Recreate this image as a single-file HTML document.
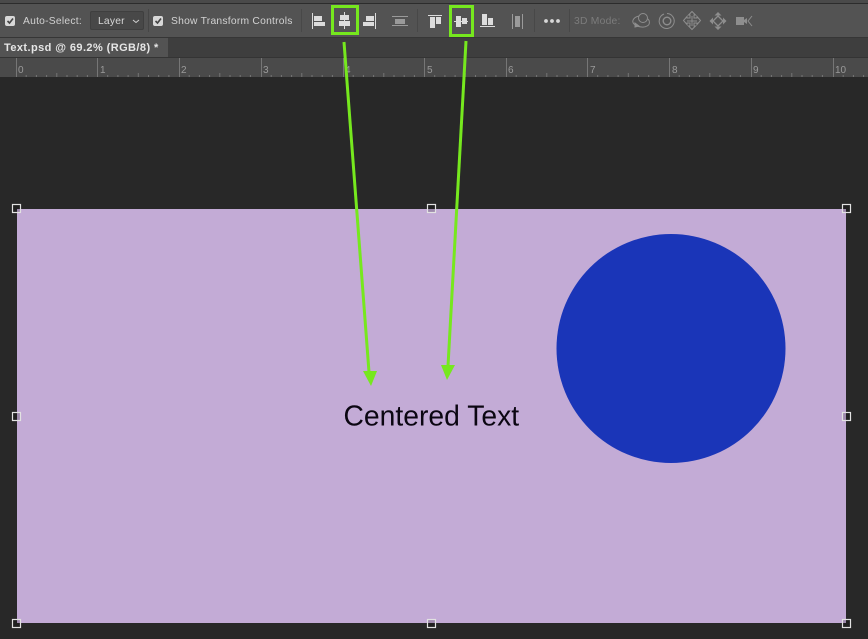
<!DOCTYPE html>
<html><head><meta charset="utf-8"><style>
html,body{margin:0;padding:0;width:868px;height:639px;overflow:hidden;background:#282828}
svg{display:block;filter:blur(.35px)}
text{font-family:"Liberation Sans",sans-serif}
</style></head><body>
<svg width="868" height="639" viewBox="0 0 868 639" xmlns="http://www.w3.org/2000/svg">
<rect width="868" height="639" fill="#282828"/>
<!-- top bars -->
<rect width="868" height="3" fill="#4a4a4a"/>
<rect y="3" width="868" height="1" fill="#2c2c2c"/>
<rect y="4" width="868" height="33" fill="#535353"/>
<rect y="37" width="868" height="1" fill="#363636"/>
<rect y="38" width="868" height="20" fill="#3e3e3e"/>
<rect y="38" width="168" height="20" fill="#535353"/>
<rect y="57" width="868" height="1" fill="#343434"/>
<rect y="58" width="868" height="19" fill="#4a4a4a"/>
<!-- options -->
<rect x="5" y="16" width="10" height="10" rx="2" fill="#d8d8d8"/>
<path d="M7.500 21l2 2 3.500-4.500" stroke="#444" stroke-width="1.600" fill="none"/>
<text x="23" y="24" font-size="10.300" fill="#d2d2d2" letter-spacing=".24">Auto-Select:</text>
<rect x="90.500" y="11.500" width="53" height="18" rx="1.500" fill="#484848" stroke="#3f3f3f"/>
<text x="98" y="24" font-size="10.300" fill="#d8d8d8" letter-spacing=".2">Layer</text>
<path d="M133 20l3 2.500 3-2.500" stroke="#d0d0d0" fill="none"/>
<rect x="148" y="9" width="1" height="23" fill="#464646"/>
<rect x="153" y="16" width="10" height="10" rx="2" fill="#d8d8d8"/>
<path d="M155.500 21l2 2 3.500-4.500" stroke="#444" stroke-width="1.600" fill="none"/>
<text x="171" y="24" font-size="10.300" fill="#d2d2d2" letter-spacing=".24">Show Transform Controls</text>
<rect x="301" y="9" width="1" height="23" fill="#484848"/>
<!-- alignment icons -->
<g fill="#dcdcdc">
<rect x="312" y="13" width="1" height="16"/><rect x="314" y="16" width="8" height="5"/><rect x="314" y="22" width="11" height="4"/>
<rect x="344" y="12" width="1" height="17"/><rect x="340" y="15" width="9" height="5"/><rect x="339" y="21" width="11" height="5"/>
<rect x="375" y="13" width="1" height="16"/><rect x="366" y="16" width="8" height="5"/><rect x="363" y="22" width="11" height="4"/>
<rect x="428" y="15" width="14" height="1"/><rect x="430" y="17" width="5" height="11"/><rect x="436" y="17" width="5" height="7"/>
<rect x="454" y="21" width="14" height="1"/><rect x="456" y="16" width="5" height="11"/><rect x="462" y="18" width="5" height="6"/>
<rect x="480" y="26" width="15" height="1"/><rect x="482" y="14" width="5" height="11"/><rect x="488" y="18" width="5" height="7"/>
</g>
<g fill="#9a9a9a">
<rect x="392" y="16" width="16" height="1"/><rect x="392" y="25" width="16" height="1"/><rect x="395" y="19" width="10" height="5"/>
<rect x="512" y="14" width="1" height="15"/><rect x="522" y="14" width="1" height="15"/><rect x="515" y="16" width="5" height="11"/>
</g>
<rect x="417" y="9" width="1" height="23" fill="#484848"/>
<rect x="534" y="9" width="1" height="23" fill="#484848"/>
<rect x="569" y="9" width="1" height="23" fill="#484848"/>
<g fill="#d8d8d8"><circle cx="546" cy="21" r="1.900"/><circle cx="552" cy="21" r="1.900"/><circle cx="558" cy="21" r="1.900"/></g>
<text x="574" y="24" font-size="10.300" fill="#7c7c7c" letter-spacing=".25">3D Mode:</text>
<!-- 3D icons -->
<g fill="none" stroke="#8e8e8e">
<circle cx="643" cy="18" r="4.500"/><path d="M639 16c-5 1-8 5-5 8 3 3 10 4 13 2 3-1 3-5 1-7"/>
<path d="M635 23l4 3-4 1z" fill="#8e8e8e"/>
<path d="M664 14a7.500 7.500 0 1 0 3-.5"/><circle cx="667" cy="21" r="3.800" stroke-width="1.400"/>
<path d="M690 18v-3h-1.500l3.500-3.500 3.500 3.500h-1.500v3h3v-1.500l3.500 4-3.500 4v-1.500h-3v3h1.500l-3.500 3.500-3.500-3.500h1.500v-3h-3v1.500l-3.500-4 3.500-4v1.500z"/><path d="M692 16v10M687 21h10"/>
<path d="M718 16l5 5-5 5-5-5z" stroke-width="1.300"/>
<path d="M752 16l-4 5 4 5" />
</g>
<g fill="#8e8e8e">
<path d="M718 12l3.500 3.500h-7zM718 30l3.500-3.500h-7zM709.500 21l3.500-3.500v7zM726.500 21l-3.500-3.500v7z"/>
<rect x="736" y="17" width="8" height="8"/><path d="M744 20l3-2v6l-3-2z"/>
</g>
<!-- tab -->
<text x="4" y="51" font-size="11" font-weight="bold" fill="#e6e6e6" letter-spacing=".42">Text.psd @ 69.2% (RGB/8) *</text>
<!-- ruler -->
<g fill="#9a9a9a" font-size="10">
<text x="18" y="73">0</text><text x="100" y="73">1</text><text x="181" y="73">2</text><text x="263" y="73">3</text><text x="345" y="73">4</text><text x="427" y="73">5</text><text x="508" y="73">6</text><text x="590" y="73">7</text><text x="672" y="73">8</text><text x="753" y="73">9</text><text x="835" y="73">10</text>
</g>
<g fill="#767676">
<rect x="16" y="58" width="1" height="19"/><rect x="97" y="58" width="1" height="19"/><rect x="179" y="58" width="1" height="19"/><rect x="261" y="58" width="1" height="19"/><rect x="343" y="58" width="1" height="19"/><rect x="424" y="58" width="1" height="19"/><rect x="506" y="58" width="1" height="19"/><rect x="587" y="58" width="1" height="19"/><rect x="669" y="58" width="1" height="19"/><rect x="751" y="58" width="1" height="19"/><rect x="833" y="58" width="1" height="19"/>
</g>
<path d="M26.200 75v2M36.400 75v2M46.600 75v2M56.800 73v4M67 75v2M77.200 75v2M87.400 75v2M107.700 75v2M117.900 75v2M128.100 75v2M138.300 73v4M148.500 75v2M158.700 75v2M168.900 75v2M189.200 75v2M199.400 75v2M209.600 75v2M219.800 73v4M230 75v2M240.200 75v2M250.400 75v2M271.200 75v2M281.400 75v2M291.600 75v2M301.800 73v4M312 75v2M322.200 75v2M332.400 75v2M353.200 75v2M363.400 75v2M373.600 75v2M383.800 73v4M394 75v2M404.200 75v2M414.400 75v2M434.700 75v2M444.900 75v2M455.100 75v2M465.300 73v4M475.500 75v2M485.700 75v2M495.900 75v2M516.200 75v2M526.400 75v2M536.600 75v2M546.800 73v4M557 75v2M567.200 75v2M577.400 75v2M597.700 75v2M607.900 75v2M618.100 75v2M628.300 73v4M638.500 75v2M648.700 75v2M658.900 75v2M679.200 75v2M689.400 75v2M699.600 75v2M709.800 73v4M720 75v2M730.200 75v2M740.400 75v2M761.200 75v2M771.400 75v2M781.600 75v2M791.800 73v4M802 75v2M812.200 75v2M822.400 75v2M843.200 75v2M853.400 75v2M863.600 75v2" stroke="#767676"/>
<!-- canvas -->
<rect x="17" y="209" width="829" height="414" fill="#c3abd6"/>
<circle cx="671" cy="348.500" r="114.500" fill="#1a35b8"/>
<text x="343.500" y="425.500" font-size="28.300" fill="#0b0612">Centered Text</text>
<!-- transform handles -->
<g fill="#00000030" stroke="#e2e2e2" stroke-width="1.200">
<rect x="12.500" y="204.500" width="8" height="8"/><rect x="427.500" y="204.500" width="8" height="8"/><rect x="842.500" y="204.500" width="8" height="8"/>
<rect x="12.500" y="412.500" width="8" height="8"/><rect x="842.500" y="412.500" width="8" height="8"/>
<rect x="12.500" y="619.500" width="8" height="8"/><rect x="427.500" y="619.500" width="8" height="8"/><rect x="842.500" y="619.500" width="8" height="8"/>
</g>
<!-- highlights -->
<g fill="none" stroke="#76e81e" stroke-width="3">
<rect x="332.500" y="6.500" width="25" height="27"/><rect x="450.500" y="6.500" width="22" height="29"/>
</g>
<!-- arrows -->
<path d="M344 42L369 372" stroke="#76e81e" stroke-width="3" fill="none"/>
<path d="M466 41L448 366" stroke="#76e81e" stroke-width="3" fill="none"/>
<path d="M363 371L377 371L371 386Z" fill="#76e81e"/>
<path d="M441 365L455 365L447 380Z" fill="#76e81e"/>
</svg>
</body></html>
